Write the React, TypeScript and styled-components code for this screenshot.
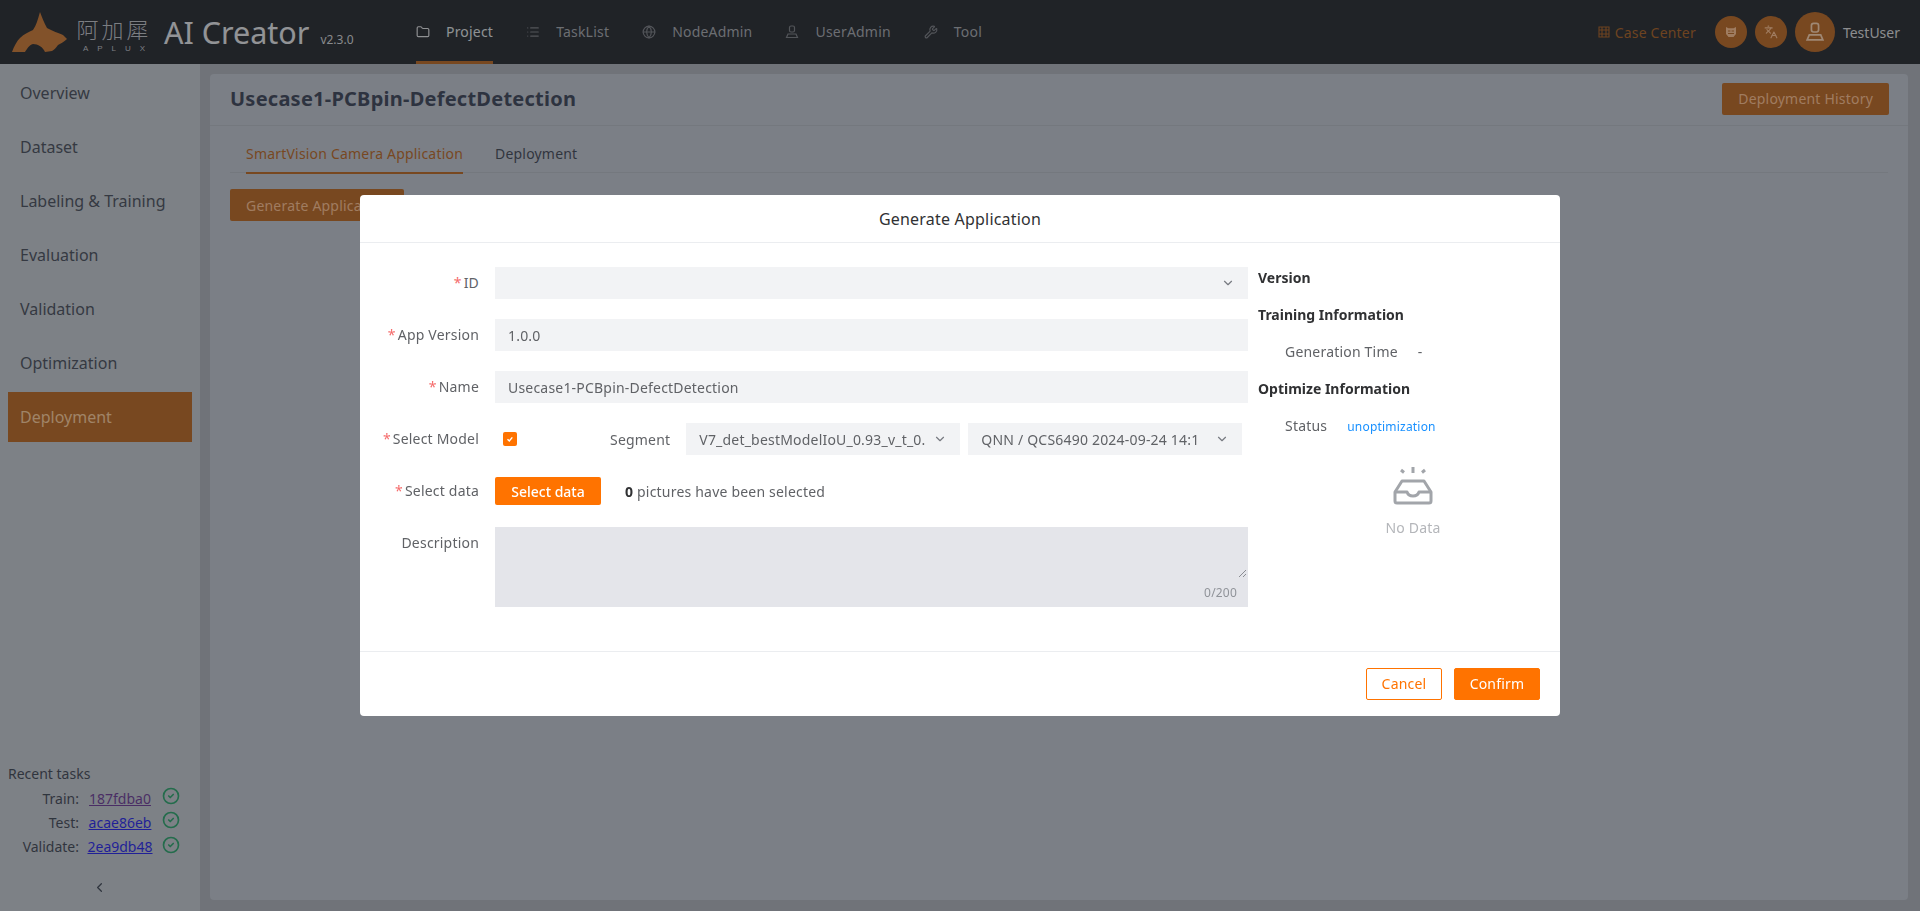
import React from 'react';
import styled, { createGlobalStyle } from 'styled-components';
import { ChevronDown, ChevronLeft, CircleCheck, Folder, Globe, Languages, List, Wrench } from 'lucide-react';

const FONT = `"Noto Sans", "Noto Sans CJK SC", sans-serif`;
// orange used behind the mask; the dialog keeps the full one
const DIM_ORANGE = '#b05000';

const GlobalStyle = createGlobalStyle`
  html, body {
    margin: 0;
    height: 100%;
    overflow: hidden;
  }
  body {
    font-family: ${FONT};
    font-size: 14px;
    letter-spacing: 0.2px;
  }
  * { box-sizing: border-box; }
`;

const Page = styled.div`
  width: 1920px;
  height: 911px;
  display: flex;
  flex-direction: column;
`;

// Top bar
const Header = styled.header`
  height: 64px;
  flex: none;
  display: flex;
  align-items: center;
  background: #00060f;
`;

const Brand = styled.div`
  width: 416px;
  flex: none;
  display: flex;
  align-items: center;
  padding-left: 11px;
`;

const BrandMark = styled.svg`
  width: 57px;
  height: 41px;
  flex: none;
`;

const Wordmark = styled.div`
  width: 72px;
  margin: 10px 0 0 10px;
  display: flex;
  flex-direction: column;
  align-items: center;
  gap: 3px;
  font-family: "Liberation Sans", "Noto Sans CJK SC", sans-serif;
  color: #b8bcc4;
`;

const WordCn = styled.span`
  font-size: 22px;
  line-height: 20px;
  font-weight: 300;
  letter-spacing: 3px;
  white-space: nowrap;
`;

const WordEn = styled.span`
  font-size: 8px;
  line-height: 9px;
  letter-spacing: 9px;
  margin-right: -9px;
  white-space: nowrap;
`;

const ProductName = styled.span`
  margin-left: 14px;
  font-size: 30.5px;
  line-height: 40px;
  letter-spacing: 0;
  color: #e4e7ec;
  white-space: nowrap;
`;

const ProductVersion = styled.span`
  margin: 14px 0 0 11px;
  font-size: 12px;
  letter-spacing: 0;
  color: #d0d3d8;
`;

const Nav = styled.nav`
  display: flex;
  height: 64px;
  gap: 33px;
`;

const NavItem = styled.a<{ $active?: boolean }>`
  height: 64px;
  display: flex;
  align-items: flex-start;
  gap: 16px;
  padding-top: 21px;
  line-height: 22px;
  color: ${(p) => (p.$active ? '#dfe2e6' : '#989ca4')};
  border-bottom: 3px solid ${(p) => (p.$active ? DIM_ORANGE : 'transparent')};
  white-space: nowrap;

  svg {
    width: 14px;
    height: 14px;
    margin-top: 4px;
    flex: none;
    color: ${(p) => (p.$active ? '#dfe2e6' : '#656a73')};
  }
`;

const HeaderRight = styled.div`
  margin-left: auto;
  display: flex;
  align-items: center;
  padding-right: 20px;
`;

const CaseCenter = styled.a`
  display: flex;
  align-items: center;
  gap: 5px;
  margin-right: 19px;
  color: #9c4600;
  white-space: nowrap;

  svg {
    width: 12px;
    height: 12px;
  }
`;

const RoundButton = styled.span<{ $size: number }>`
  width: ${(p) => p.$size}px;
  height: ${(p) => p.$size}px;
  margin-right: 8px;
  border-radius: 50%;
  background: ${DIM_ORANGE};
  display: flex;
  align-items: center;
  justify-content: center;
  color: #ffb880;
`;

const UserName = styled.span`
  letter-spacing: 0;
  color: #d8dade;
`;

// Page body
const Body = styled.div`
  flex: 1;
  min-height: 0;
  display: flex;
  background: #a0a6b2;
`;

const Sidebar = styled.aside`
  width: 200px;
  flex: none;
  display: flex;
  flex-direction: column;
  background: #bac2cc;
  padding-top: 4px;
`;

const SideItem = styled.a<{ $active?: boolean }>`
  height: 50px;
  margin: 0 8px 4px;
  padding-left: 12px;
  display: flex;
  align-items: center;
  font-size: 16px;
  letter-spacing: 0;
  color: ${(p) => (p.$active ? '#ffc890' : '#2a3344')};
  background: ${(p) => (p.$active ? DIM_ORANGE : 'transparent')};
`;

const Recent = styled.div`
  margin-top: auto;
  padding-left: 8px;
  letter-spacing: 0;
  color: #1f2a3c;
`;

const RecentTitle = styled.div`
  line-height: 24px;
`;

const RecentRow = styled.div`
  display: grid;
  grid-template-columns: 71px 66px 18px;
  column-gap: 8px;
  align-items: center;
  height: 24.4px;
`;

const RecentLabel = styled.span`
  text-align: right;
`;

const RecentLink = styled.a<{ $visited?: boolean }>`
  text-align: center;
  text-decoration: underline;
  color: ${(p) => (p.$visited ? '#551a8b' : '#0000ee')};
`;

const RecentCheck = styled(CircleCheck)`
  width: 18px;
  height: 18px;
  margin: -4px 0 0 1px;
  color: #089858;
`;

const Collapse = styled.div`
  height: 52px;
  display: flex;
  align-items: center;
  justify-content: center;
  padding: 4px 9px 0 0;
  color: #1f2a3c;
`;

const Main = styled.main`
  flex: 1;
  min-width: 0;
  padding: 10px 12px 11px 10px;
`;

const Card = styled.section`
  height: 100%;
  background: #b6becc;
  border-radius: 4px;
`;

const CardHead = styled.div`
  height: 52px;
  display: flex;
  align-items: center;
  justify-content: space-between;
  padding: 0 19px 2px 20px;
  border-bottom: 1px solid #a8b0bc;
`;

const CardTitle = styled.h1`
  margin: 0;
  font-size: 20px;
  font-weight: 700;
  letter-spacing: 0.24px;
  color: #1a2640;
`;

const Tabs = styled.div`
  margin: 10px 20px 0;
  height: 37px;
  display: flex;
  gap: 32px;
  padding-left: 16px;
  border-bottom: 1px solid #a8b0bc;
`;

const Tab = styled.a<{ $active?: boolean }>`
  height: 38px;
  line-height: 36px;
  color: ${(p) => (p.$active ? DIM_ORANGE : '#1f2a3c')};
  border-bottom: 2px solid ${(p) => (p.$active ? DIM_ORANGE : 'transparent')};
`;

const PageButton = styled.button`
  height: 32px;
  padding: 0 16px;
  border: 0;
  border-radius: 2px;
  background: ${DIM_ORANGE};
  color: #ffb880;
  font: inherit;
  letter-spacing: inherit;
`;

const CardToolbar = styled.div`
  padding: 16px 20px;
`;

// Dialog
const Overlay = styled.div`
  position: fixed;
  inset: 0;
  background: rgba(64, 64, 64, 0.5);
  display: flex;
  justify-content: center;
  align-items: flex-start;
  padding-top: 195px;
`;

const Dialog = styled.div`
  width: 1200px;
  height: 521px;
  background: #fff;
  border-radius: 4px;
  display: flex;
  flex-direction: column;
  color: #606266;
`;

const DialogHead = styled.div`
  height: 48px;
  flex: none;
  display: flex;
  align-items: center;
  justify-content: center;
  font-size: 16px;
  color: #303133;
  border-bottom: 1px solid #ebedf0;
`;

const DialogBody = styled.div`
  flex: 1;
  min-height: 0;
  display: grid;
  grid-template-columns: 888px 1fr;
  column-gap: 10px;
  padding-top: 16px;
`;

const Form = styled.div`
  padding-top: 8px;
  display: flex;
  flex-direction: column;
  gap: 20px;
`;

const FormRow = styled.div`
  display: grid;
  grid-template-columns: 119px 1fr;
  column-gap: 16px;
  align-items: center;
  height: 32px;

  &:last-child {
    height: 80px;
  }
`;

const FormLabel = styled.label<{ $required?: boolean; $top?: boolean }>`
  height: 32px;
  text-align: right;
  white-space: nowrap;
  align-self: ${(p) => (p.$top ? 'start' : 'center')};
  line-height: 32px;

  &::before {
    content: ${(p) => (p.$required ? `'*'` : 'none')};
    color: #f56c6c;
    margin-right: 2px;
  }
`;

const Field = styled.div<{ $width?: number }>`
  height: 32px;
  ${(p) => (p.$width ? `width: ${p.$width}px; flex: none;` : '')}
  padding: 0 13px;
  background: #f2f3f5;
  display: flex;
  align-items: center;
  justify-content: space-between;
  color: #606266;
  white-space: nowrap;

  svg {
    width: 14px;
    height: 14px;
    flex: none;
    color: #777a80;
  }
`;

const FieldText = styled.span`
  overflow: hidden;
`;

const ModelRow = styled.div`
  display: flex;
  align-items: center;
`;

const CheckBox = styled.span`
  width: 14px;
  height: 14px;
  margin-left: 8px;
  background: #ff7300;
  border-radius: 2px;
  display: flex;
  align-items: center;
  justify-content: center;
  flex: none;
`;

const SegmentLabel = styled.span`
  margin: 0 16px 0 93px;
`;

const SelectGroup = styled.div`
  display: flex;
  gap: 8px;
`;

const DataRow = styled.div`
  display: flex;
  align-items: center;
  gap: 24px;
`;

const DataButton = styled.button`
  width: 106px;
  height: 28px;
  border: 0;
  border-radius: 2px;
  background: #ff7300;
  color: #fff;
  font: inherit;
  font-weight: 500;
  letter-spacing: 0;
`;

const DataCount = styled.span`
  b { color: #303133; }
`;

const TextArea = styled.div`
  position: relative;
  height: 80px;
  background: #e4e5ea;
`;

const Counter = styled.span`
  position: absolute;
  right: 11px;
  bottom: 6px;
  font-size: 12px;
  color: #909399;
`;

const ResizeGrip = styled.svg`
  position: absolute;
  right: 1px;
  bottom: 29px;
  width: 9px;
  height: 9px;
`;

const InfoColumn = styled.div`
  display: flex;
  flex-direction: column;
`;

const InfoHeading = styled.div`
  height: 37px;
  line-height: 37px;
  font-weight: 700;
  letter-spacing: 0;
  color: #303133;
`;

const InfoRow = styled.div`
  height: 37px;
  margin-left: 27px;
  display: flex;
  align-items: center;
  gap: 20px;
`;

const StatusLink = styled.a`
  font-size: 12px;
  margin-top: 1px;
  color: #1890ff;
`;

const Empty = styled.div`
  margin: 23px 20px 0 28px;
  display: flex;
  flex-direction: column;
  align-items: center;
  gap: 13px;
  color: #b4b6ba;
`;

const DialogFoot = styled.div`
  height: 65px;
  flex: none;
  display: flex;
  align-items: center;
  justify-content: flex-end;
  gap: 12px;
  padding: 0 20px 1px;
  border-top: 1px solid #ebedf0;
`;

const FootButton = styled.button<{ $primary?: boolean; $width: number }>`
  width: ${(p) => p.$width}px;
  height: 32px;
  border: 1px solid #ff7300;
  border-radius: 2px;
  background: ${(p) => (p.$primary ? '#ff7300' : '#fff')};
  color: ${(p) => (p.$primary ? '#fff' : '#ff7300')};
  font: inherit;
  letter-spacing: inherit;
`;

const sideItems = ['Overview', 'Dataset', 'Labeling & Training', 'Evaluation', 'Validation', 'Optimization', 'Deployment'];

const recentTasks = [
  { label: 'Train:', id: '187fdba0', visited: true },
  { label: 'Test:', id: 'acae86eb' },
  { label: 'Validate:', id: '2ea9db48' },
];

const UserGlyph = () => (
  <svg viewBox="0 0 14 14" fill="none" stroke="currentColor" strokeWidth="1.2">
    <rect x="4.5" y="1" width="5" height="6" rx="1.5" />
    <path d="M3 9h8l1.5 3.5h-11z" />
  </svg>
);

const CaseGlyph = () => (
  <svg viewBox="0 0 12 12" fill="none" stroke="currentColor" strokeWidth="1.1">
    <path d="M1 1h10v10H1zM1 4h10M1 8h10M4 1v10M8 1v10" />
  </svg>
);

const MaskGlyph = () => (
  <svg width="14" height="14" viewBox="0 0 14 14" fill="currentColor">
    <path d="M2 2l2.5 1.2h5L12 2v7l-2.5 3h-5L2 9z" />
    <path d="M4 6h2.4M7.6 6H10M4 8.5h6" stroke={DIM_ORANGE} strokeWidth="1" />
  </svg>
);

const EmptyIcon = () => (
  <svg width="40" height="38" viewBox="0 0 40 38" fill="none" stroke="#a2a5aa" strokeWidth="3" strokeLinejoin="round">
    <path d="M8 3l3 2.5M20 0v6M32 3l-3 2.5" strokeWidth="3" />
    <path d="M9 14h22l7 11v9a2 2 0 0 1-2 2H4a2 2 0 0 1-2-2v-9z" />
    <path d="M2 25h12c1 3 3 4 6 4s5-1 6-4h12" />
  </svg>
);

const App = () => (
  <Page>
    <GlobalStyle />
    <Header>
      <Brand>
        <BrandMark viewBox="11 12 57 41">
          <path
            fill="#c46414"
            d="M40 12C42 17 44 23 47 28C52 31 59 33 63 35L67 39C64 42 60 44 58 45C56 48 54 50 52 51L45 52C43 47 38 44 33 44C29 45 27 49 25 52L12 52C14 46 17 41 20 38C24 34 29 32 33 30C36 26 38 19 40 12Z"
          />
        </BrandMark>
        <Wordmark>
          <WordCn>阿加犀</WordCn>
          <WordEn>APLUX</WordEn>
        </Wordmark>
        <ProductName>AI Creator</ProductName>
        <ProductVersion>v2.3.0</ProductVersion>
      </Brand>
      <Nav>
        <NavItem $active>
          <Folder />
          Project
        </NavItem>
        <NavItem>
          <List />
          TaskList
        </NavItem>
        <NavItem>
          <Globe />
          NodeAdmin
        </NavItem>
        <NavItem>
          <UserGlyph />
          UserAdmin
        </NavItem>
        <NavItem>
          <Wrench />
          Tool
        </NavItem>
      </Nav>
      <HeaderRight>
        <CaseCenter>
          <CaseGlyph />
          Case Center
        </CaseCenter>
        <RoundButton $size={32}>
          <MaskGlyph />
        </RoundButton>
        <RoundButton $size={32}>
          <Languages size={14} />
        </RoundButton>
        <RoundButton $size={40}>
          <svg width="20" height="20" viewBox="0 0 14 14" fill="none" stroke="#ffd0a8" strokeWidth="1.2">
            <rect x="4.5" y="1" width="5" height="6" rx="1.5" />
            <path d="M3 9h8l1.5 3.5h-11z" />
          </svg>
        </RoundButton>
        <UserName>TestUser</UserName>
      </HeaderRight>
    </Header>
    <Body>
      <Sidebar>
        {sideItems.map((name) => (
          <SideItem key={name} $active={name === 'Deployment'}>
            {name}
          </SideItem>
        ))}
        <Recent>
          <RecentTitle>Recent tasks</RecentTitle>
          {recentTasks.map((t) => (
            <RecentRow key={t.id}>
              <RecentLabel>{t.label}</RecentLabel>
              <RecentLink $visited={t.visited}>{t.id}</RecentLink>
              <RecentCheck strokeWidth={2.2} />
            </RecentRow>
          ))}
          <Collapse>
            <ChevronLeft size={15} />
          </Collapse>
        </Recent>
      </Sidebar>
      <Main>
        <Card>
          <CardHead>
            <CardTitle>Usecase1-PCBpin-DefectDetection</CardTitle>
            <PageButton>Deployment History</PageButton>
          </CardHead>
          <Tabs>
            <Tab $active>SmartVision Camera Application</Tab>
            <Tab>Deployment</Tab>
          </Tabs>
          <CardToolbar>
            <PageButton>Generate Application</PageButton>
          </CardToolbar>
        </Card>
      </Main>
    </Body>
    <Overlay>
      <Dialog>
        <DialogHead>Generate Application</DialogHead>
        <DialogBody>
          <Form>
            <FormRow>
              <FormLabel $required>ID</FormLabel>
              <Field>
                <span />
                <ChevronDown />
              </Field>
            </FormRow>
            <FormRow>
              <FormLabel $required>App Version</FormLabel>
              <Field>1.0.0</Field>
            </FormRow>
            <FormRow>
              <FormLabel $required>Name</FormLabel>
              <Field>Usecase1-PCBpin-DefectDetection</Field>
            </FormRow>
            <FormRow>
              <FormLabel $required>Select Model</FormLabel>
              <ModelRow>
                <CheckBox>
                  <svg width="10" height="10" viewBox="0 0 10 10" fill="none" stroke="#fff" strokeWidth="1.4">
                    <path d="M2.5 5.2l1.8 1.8 3-3.6" />
                  </svg>
                </CheckBox>
                <SegmentLabel>Segment</SegmentLabel>
                <SelectGroup>
                  <Field $width={274}>
                    <FieldText>V7_det_bestModelIoU_0.93_v_t_0.</FieldText>
                    <ChevronDown />
                  </Field>
                  <Field $width={274}>
                    <FieldText>QNN / QCS6490 2024-09-24 14:1</FieldText>
                    <ChevronDown />
                  </Field>
                </SelectGroup>
              </ModelRow>
            </FormRow>
            <FormRow>
              <FormLabel $required>Select data</FormLabel>
              <DataRow>
                <DataButton>Select data</DataButton>
                <DataCount>
                  <b>0</b> pictures have been selected
                </DataCount>
              </DataRow>
            </FormRow>
            <FormRow>
              <FormLabel $top>Description</FormLabel>
              <TextArea>
                <ResizeGrip viewBox="0 0 9 9" stroke="#8a8c92" strokeWidth="1">
                  <path d="M1 8L8 1M5 8l3-3" />
                </ResizeGrip>
                <Counter>0/200</Counter>
              </TextArea>
            </FormRow>
          </Form>
          <InfoColumn>
            <InfoHeading>Version</InfoHeading>
            <InfoHeading>Training Information</InfoHeading>
            <InfoRow>
              <span>Generation Time</span>
              <span>-</span>
            </InfoRow>
            <InfoHeading>Optimize Information</InfoHeading>
            <InfoRow>
              <span>Status</span>
              <StatusLink>unoptimization</StatusLink>
            </InfoRow>
            <Empty>
              <EmptyIcon />
              No Data
            </Empty>
          </InfoColumn>
        </DialogBody>
        <DialogFoot>
          <FootButton $width={76}>Cancel</FootButton>
          <FootButton $primary $width={86}>
            Confirm
          </FootButton>
        </DialogFoot>
      </Dialog>
    </Overlay>
  </Page>
);

export default App;
